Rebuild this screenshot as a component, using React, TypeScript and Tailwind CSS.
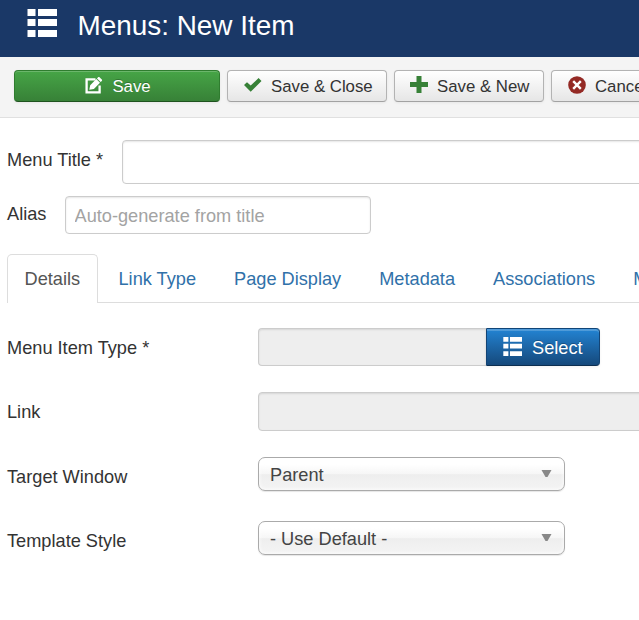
import type { ReactNode } from "react";

function ListIcon({ className }: { className: string }) {
  return (
    <svg viewBox="0 0 30 28" className={className} fill="currentColor" preserveAspectRatio="none" aria-hidden="true">
      <path d="M.5 0h8v7h-8zM11 0h19v7H11zM.5 10h8v7h-8zM11 10h19v7H11zM.5 21h8v7h-8zM11 21h19v7H11z" />
    </svg>
  );
}

function EditIcon() {
  return (
    <svg viewBox="0 0 18 17" className="mb-[2px] h-[17px] w-[18px]" aria-hidden="true">
      <path d="M10.500 2.400H1.600v13h13V8.500" fill="none" stroke="#fff" strokeWidth="2.300" />
      <path d="M4.300 12.800l.9-4.600 6.100-6.100 3.700 3.700-6.100 6.100zM12 1.400l1.100-1.100c.4-.4 1-.4 1.400 0l2.300 2.300c.4.4.4 1 0 1.400l-1.100 1.100z" fill="#fff" />
    </svg>
  );
}

function CheckIcon() {
  return (
    <svg viewBox="0 0 18 14" className="mb-[2px] h-[14px] w-[18px]" fill="#378137" aria-hidden="true">
      <path d="M0 7.100L3 4.200 6.700 7.600 14.600 0 17.500 2.900 6.700 13.700z" />
    </svg>
  );
}

function PlusIcon() {
  return (
    <svg viewBox="0 0 18 17" className="mb-[3px] -ml-px h-[17px] w-[18px]" fill="#378137" aria-hidden="true">
      <path d="M6.500 0h5v6H18v5h-6.500v6h-5v-6H0V6h6.500z" />
    </svg>
  );
}

function CancelIcon() {
  return (
    <svg viewBox="0 0 18 18" className="mb-[2px] h-[18px] w-[18px]" aria-hidden="true">
      <circle cx="9" cy="9" r="8.800" fill="#942a25" />
      <path d="M5.200 5.200l7.600 7.600M12.800 5.200l-7.600 7.600" stroke="#fff" strokeWidth="2.400" />
    </svg>
  );
}

function ToolButton({ icon, label, className }: { icon: ReactNode; label: string; className: string }) {
  return (
    <button
      className={`flex h-8 shrink-0 items-center rounded-[4px] border border-[#b3b3b3] border-b-[#a2a2a2] bg-linear-to-b from-white to-[#e6e6e6] pl-4 text-[16.8px] whitespace-nowrap text-[#333] shadow-[inset_0_1px_0_rgba(255,255,255,.2),0_1px_3px_rgba(0,0,0,.06)] ${className}`}
    >
      {icon}
      <span className="ml-[9px]">{label}</span>
    </button>
  );
}

function Row({ label, labelClass, className, children }: { label: string; labelClass: string; className: string; children: ReactNode }) {
  return (
    <div className={`flex items-center ${className}`}>
      <label className={`w-[251px] shrink-0 ${labelClass}`}>{label}</label>
      {children}
    </div>
  );
}

function Dropdown({ value }: { value: string }) {
  return (
    <div className="flex h-[34px] w-[307px] items-center justify-between rounded-[7px] border border-[#aaa] bg-[linear-gradient(#fff_20%,#f6f6f6_50%,#eee_52%,#f4f4f4_100%)] pr-3 pl-[11px] text-[#444] shadow-[inset_0_0_4px_#fff,0_1px_1px_rgba(0,0,0,.1)]">
      <span className="pt-[2px]">{value}</span>
      <svg viewBox="0 0 11 8" className="h-2 w-[11px]" aria-hidden="true">
        <path d="M.5 0h10L6.500 7h-2z" fill="#888" />
      </svg>
    </div>
  );
}

const tabs = ["Link Type", "Page Display", "Metadata", "Associations", "Module Assignment"];

export default function App() {
  return (
    <div className="h-[620px] w-[639px] overflow-hidden bg-white font-['Liberation_Sans',Arial,sans-serif] text-[18.2px] leading-[25px] text-[#333]">
      <header className="flex h-[57px] items-start bg-[#1a3867] pl-[27px] text-white">
        <ListIcon className="mt-[9px] h-[28px] w-[30px]" />
        <h1 className="mt-[6px] ml-[20.500px] text-[27.900px] leading-[40px]">Menus: New Item</h1>
      </header>

      <div className="flex h-[61px] items-start gap-[7px] border-b border-[#e0e0e0] bg-[#f4f4f4] pt-[13px] pl-[14px]">
        <button className="flex h-8 w-[206px] shrink-0 items-center justify-center gap-[9px] rounded-[4px] border border-[#2f7d2f] border-b-[#1f531f] bg-linear-to-b from-[#46a546] to-[#378137] pl-[2px] text-[16.8px] text-white shadow-[inset_0_1px_0_rgba(255,255,255,.2),0_1px_3px_rgba(0,0,0,.06)] text-shadow-[0_-1px_0_rgba(0,0,0,.25)]">
          <EditIcon />
          <span>Save</span>
        </button>
        <ToolButton className="w-[160px]" icon={<CheckIcon />} label="Save & Close" />
        <ToolButton className="w-[150px]" icon={<PlusIcon />} label="Save & New" />
        <ToolButton className="w-[120px]" icon={<CancelIcon />} label="Cancel" />
      </div>

      <main className="pt-[22px] pl-[7px]">
        <div className="flex h-[44px] items-center">
          <label className="mb-1 w-[115px] shrink-0">Menu Title *</label>
          <input className="h-full w-[600px] shrink-0 rounded-[4px] border border-[#ccc] bg-white shadow-[inset_0_1px_2px_rgba(0,0,0,.1)]" />
        </div>
        <div className="mt-3 flex h-[38px] items-center">
          <label className="mb-[2px] w-[58px] shrink-0">Alias</label>
          <input
            placeholder="Auto-generate from title"
            className="h-full w-[306px] rounded-[4px] border border-[#ccc] bg-white pt-[2px] pl-[8.500px] shadow-[inset_0_1px_2px_rgba(0,0,0,.1)] placeholder:text-[#a3a3a3]"
          />
        </div>

        <nav className="mt-5 flex h-[49px] gap-[3px] border-b border-[#ddd] whitespace-nowrap text-[#3071a9]">
          <a className="mb-[-1px] h-[49px] w-[91px] shrink-0 rounded-t-[5px] border border-b-0 border-[#ddd] bg-white pt-[12px] pl-[16.500px] text-[#555]">
            Details
          </a>
          {tabs.map((tab) => (
            <a key={tab} className="shrink-0 px-[17.500px] pt-[13px]">
              {tab}
            </a>
          ))}
        </nav>

        <Row label="Menu Item Type *" labelClass="pt-[2px]" className="mt-[25px] h-[38px]">
          <input readOnly className="h-full w-[228px] rounded-l-[4px] border border-r-0 border-[#ccc] bg-[#eee] shadow-[inset_0_1px_2px_rgba(0,0,0,.1)]" />
          <button className="flex h-full w-[114px] items-center rounded-r-[4px] border border-[#134475] border-t-[#104577] border-b-[#0c2e50] bg-linear-to-b from-[#2384d3] to-[#15497c] pl-4 text-white shadow-[inset_0_2px_0_rgba(255,255,255,.2),0_1px_3px_rgba(0,0,0,.06)] text-shadow-[0_-1px_0_rgba(0,0,0,.25)]">
            <ListIcon className="mb-[2px] h-[19px] w-[19px]" />
            <span className="ml-[10px] pt-[2px]">Select</span>
          </button>
        </Row>
        <Row label="Link" labelClass="pt-[2px]" className="mt-[26px] h-[39px]">
          <input readOnly className="h-full w-[500px] shrink-0 rounded-[4px] border border-[#ccc] bg-[#eee] shadow-[inset_0_1px_2px_rgba(0,0,0,.1)]" />
        </Row>
        <Row label="Target Window" labelClass="pt-[6px]" className="mt-[26px] h-[34px]">
          <Dropdown value="Parent" />
        </Row>
        <Row label="Template Style" labelClass="pt-[6px]" className="mt-[30px] h-[34px]">
          <Dropdown value="- Use Default -" />
        </Row>
      </main>
    </div>
  );
}
